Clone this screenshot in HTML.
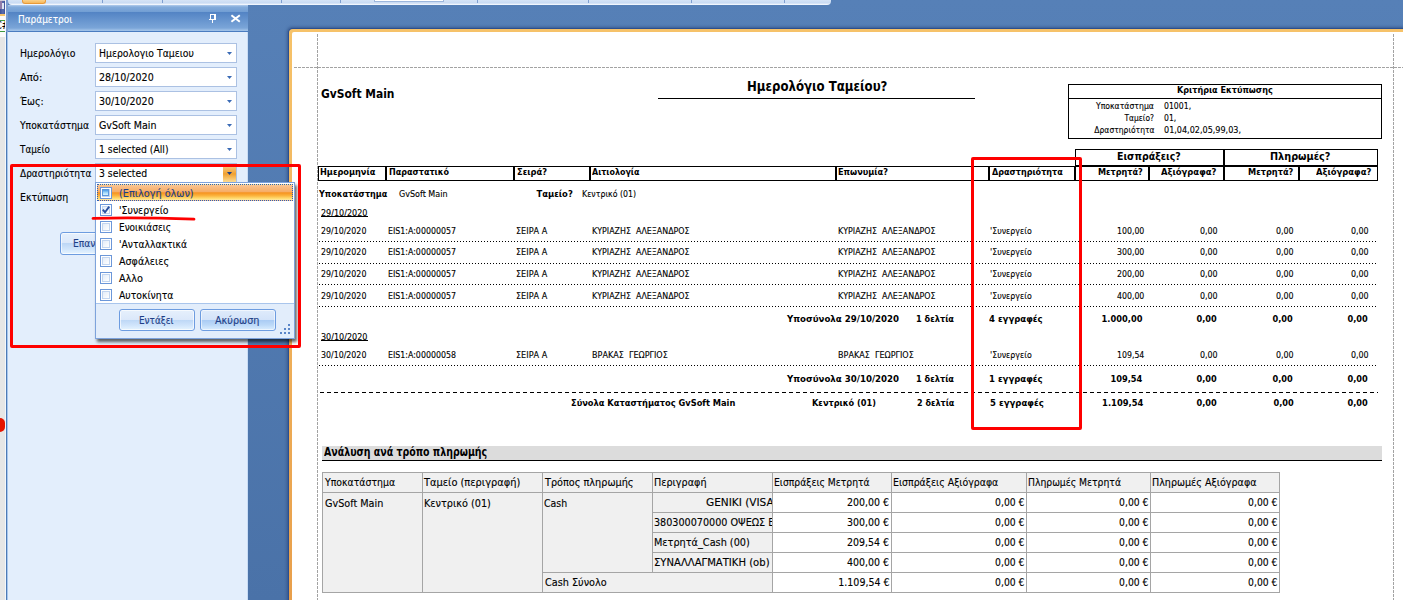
<!DOCTYPE html><html lang="el"><head><meta charset="utf-8"><title>Ημερολόγιο Ταμείου</title><style>
html,body{margin:0;padding:0}
body{width:1403px;height:600px;overflow:hidden;position:relative;background:linear-gradient(#5680b7 0,#4a72a8 600px);font-family:'DejaVu Sans Condensed','DejaVu Sans','Liberation Sans',sans-serif;font-stretch:condensed}
div,span{position:absolute;box-sizing:border-box}
.t{white-space:pre;line-height:1;transform-origin:0 0;-webkit-text-stroke:.12px currentColor}
.b{font-weight:700;-webkit-text-stroke:0}
.r{transform-origin:100% 0}
</style></head><body>
<div style="left:8px;top:0px;width:823px;height:5px;background:linear-gradient(#d6e4f6 0,#c9dbf3 60%,#e6eefa 80%,#fbfdff);border-radius:0 0 4px 4px"></div>
<div style="left:102px;top:0px;width:1px;height:3px;background:#7f9fd0"></div>
<div style="left:162px;top:0px;width:1px;height:3px;background:#7f9fd0"></div>
<div style="left:281px;top:0px;width:1px;height:3px;background:#7f9fd0"></div>
<div style="left:340px;top:0px;width:1px;height:3px;background:#7f9fd0"></div>
<div style="left:477px;top:0px;width:1px;height:3px;background:#7f9fd0"></div>
<div style="left:588px;top:0px;width:1px;height:3px;background:#7f9fd0"></div>
<div style="left:691px;top:0px;width:1px;height:3px;background:#7f9fd0"></div>
<div style="left:784px;top:0px;width:1px;height:3px;background:#7f9fd0"></div>
<div style="left:22px;top:0px;width:24px;height:4px;background:linear-gradient(#fbd28a,#f7b85a);border:1px solid #e89a3a;border-top:0;border-radius:0 0 3px 3px"></div>
<div style="left:374px;top:0px;width:70px;height:2px;background:#fff;border:1px solid #9db7dd;border-top:0"></div>
<div style="left:0px;top:0px;width:6px;height:600px;background:#e6e6e6"></div>
<div style="left:0px;top:0px;width:5px;height:14px;background:linear-gradient(90deg,#3b4f96,#5d6fb0 60%,#3b4f96)"></div>
<div style="left:0px;top:0px;width:5px;height:1px;background:#cfcbd8"></div>
<div style="left:0px;top:1px;width:2px;height:8px;background:#8f7ba9"></div>
<div style="left:2px;top:3px;width:2px;height:6px;background:#dde5f4"></div>
<div style="left:0px;top:14px;width:5px;height:2px;background:#f6c46c"></div>
<div style="left:0px;top:16px;width:5px;height:21px;background:#fbfbfb"></div>
<div style="left:0px;top:20px;width:5px;height:1px;background:#3f9a3f"></div>
<div style="left:0px;top:31px;width:5px;height:1px;background:#3f9a3f"></div>
<span class="t" style="top:21px;font-size:10px;left:-4.6px;">C#</span>
<div style="left:5px;top:0px;width:1px;height:600px;background:#f4f7fb"></div>
<div style="left:6px;top:0px;width:1px;height:600px;background:#4d7ab6"></div>
<div style="left:7px;top:0px;width:1px;height:600px;background:#a8c6ec"></div>
<div style="left:6px;top:0px;width:2px;height:32px;background:#7d9fd2"></div>
<div style="left:0px;top:418px;width:5px;height:14px;background:#e61400;border-radius:0 5px 5px 0"></div>
<div style="left:8px;top:5px;width:240px;height:595px;background:#e3eefc;border-right:1px solid #c9dcf5"></div>
<div style="left:8px;top:5px;width:240px;height:27px;background:linear-gradient(#b3cdec 0,#83abdb 2px,#739fd4 6.5px,#5283c4 7px,#7aa5d8 23px,#9abde5 25px,#9fc1e7 25.8px,#4a7cc0 26px)"></div>
<span class="t" style="top:14px;font-size:11px;color:#fff;left:18px;transform:scaleX(0.9022);">Παράμετροι</span>
<div style="left:210px;top:14px;width:6px;height:5px;border:1px solid #fff;border-right-width:2px;border-bottom:0"></div>
<div style="left:209px;top:19px;width:7px;height:1px;background:#fff"></div>
<div style="left:212px;top:20px;width:1px;height:3px;background:#fff"></div>
<svg style="position:absolute;left:230px;top:14px" width="11" height="9" viewBox="0 0 11 9"><path d="M1.4 1.2 L9.8 7.8 M9.8 1.2 L1.4 7.8" stroke="#fff" stroke-width="2" fill="none"/></svg>
<span class="t" style="top:48px;font-size:11px;left:19.6px;transform:scaleX(0.9455);">Ημερολόγιο</span>
<span class="t" style="top:72px;font-size:11px;left:19.6px;transform:scaleX(1.0079);">Από:</span>
<span class="t" style="top:96px;font-size:11px;left:19.6px;transform:scaleX(0.9546);">Έως:</span>
<span class="t" style="top:120px;font-size:11px;left:19.6px;transform:scaleX(0.9297);">Υποκατάστημα</span>
<span class="t" style="top:144px;font-size:11px;left:19.6px;transform:scaleX(0.8922);">Ταμείο</span>
<span class="t" style="top:168px;font-size:11px;left:19.6px;transform:scaleX(0.9097);">Δραστηριότητα</span>
<span class="t" style="top:192px;font-size:11px;left:19.6px;transform:scaleX(0.9513);">Εκτύπωση</span>
<div style="left:95px;top:43px;width:142px;height:20px;background:#fff;border:1px solid #abc1e3"></div>
<span class="t" style="top:48px;font-size:11px;left:98.8px;transform:scaleX(0.9389);">Ημερολογιο Ταμειου</span>
<svg style="position:absolute;left:227px;top:52px" width="5" height="3" viewBox="0 0 5 3"><path d="M0 0H5L2.5 3Z" fill="#3a6ab5"/></svg>
<div style="left:95px;top:67px;width:142px;height:20px;background:#fff;border:1px solid #abc1e3"></div>
<span class="t" style="top:72px;font-size:11px;left:98.8px;transform:scaleX(0.9591);">28/10/2020</span>
<svg style="position:absolute;left:227px;top:76px" width="5" height="3" viewBox="0 0 5 3"><path d="M0 0H5L2.5 3Z" fill="#3a6ab5"/></svg>
<div style="left:95px;top:91px;width:142px;height:20px;background:#fff;border:1px solid #abc1e3"></div>
<span class="t" style="top:96px;font-size:11px;left:98.8px;transform:scaleX(0.9591);">30/10/2020</span>
<svg style="position:absolute;left:227px;top:100px" width="5" height="3" viewBox="0 0 5 3"><path d="M0 0H5L2.5 3Z" fill="#3a6ab5"/></svg>
<div style="left:95px;top:115px;width:142px;height:20px;background:#fff;border:1px solid #abc1e3"></div>
<span class="t" style="top:120px;font-size:11px;left:98.8px;transform:scaleX(0.9599);">GvSoft Main</span>
<svg style="position:absolute;left:227px;top:124px" width="5" height="3" viewBox="0 0 5 3"><path d="M0 0H5L2.5 3Z" fill="#3a6ab5"/></svg>
<div style="left:95px;top:139px;width:142px;height:20px;background:#fff;border:1px solid #abc1e3"></div>
<span class="t" style="top:144px;font-size:11px;left:98.8px;transform:scaleX(0.9347);">1 selected (All)</span>
<svg style="position:absolute;left:227px;top:148px" width="5" height="3" viewBox="0 0 5 3"><path d="M0 0H5L2.5 3Z" fill="#3a6ab5"/></svg>
<div style="left:95px;top:163px;width:142px;height:20px;background:#fff;border:1px solid #abc1e3"></div>
<span class="t" style="top:168px;font-size:11px;left:98.8px;transform:scaleX(0.9391);">3 selected</span>
<div style="left:223px;top:164px;width:13px;height:18px;background:linear-gradient(#f8d29a,#f2aa44 45%,#f0a030 55%,#fcdc94)"></div>
<svg style="position:absolute;left:227px;top:172px" width="5" height="3" viewBox="0 0 5 3"><path d="M0 0H5L2.5 3Z" fill="#1e3f87"/></svg>
<div style="left:60px;top:232px;width:120px;height:23px;background:linear-gradient(#e6f0fc 0,#dbe8fa 48%,#bdd7f6 50%,#cfe4fb 75%,#e6f4ff);border:1px solid #6d9ce0;border-radius:3px;box-shadow:inset 0 0 0 1px rgba(255,255,255,.65)"></div>
<span class="t" style="top:238px;font-size:11px;color:#1e3f87;left:72.7px;transform:scaleX(0.9272);">Επαν</span>
<div style="left:289px;top:29px;width:1200px;height:700px;background:linear-gradient(#f6c269 0,#e89f4b 571px);border-radius:4px 0 0 0;box-shadow:0 0 0 1px #2c4f8f,-1px -1px 3px 1px rgba(30,55,110,.5)"></div>
<div style="left:292px;top:32px;width:1200px;height:700px;background:#fff;border-radius:2px 0 0 0"></div>
<div style="left:317px;top:34px;width:1px;height:566px;background:repeating-linear-gradient(180deg,#a3a3a3 0 3px,transparent 3px 4px)"></div>
<div style="left:1393px;top:34px;width:1px;height:566px;background:repeating-linear-gradient(180deg,#a3a3a3 0 3px,transparent 3px 4px)"></div>
<div style="left:294px;top:67px;width:1109px;height:1px;background:repeating-linear-gradient(90deg,#a3a3a3 0 3px,transparent 3px 4px)"></div>
<span class="t b" style="top:88px;font-size:12px;left:321px;transform:scaleX(0.9916);">GvSoft Main</span>
<span class="t b" style="top:80px;font-size:13.33px;left:746.5px;transform:scaleX(0.9796);">Ημερολόγιο Ταμείου?</span>
<div style="left:658px;top:98px;width:317px;height:1px;background:#000"></div>
<div style="left:1068px;top:84px;width:314px;height:55px;border:1px solid #000"></div>
<div style="left:1068px;top:98px;width:314px;height:1px;background:#000"></div>
<span class="t b" style="top:85px;font-size:9.33px;left:1177.3px;transform:scaleX(0.9644);">Κριτήρια Εκτύπωσης</span>
<span class="t r" style="top:101px;font-size:9.33px;left:1091.45px;transform:scaleX(0.9213);">Υποκατάστημα</span>
<span class="t r" style="top:113px;font-size:9.33px;left:1121.43px;transform:scaleX(0.8948);">Ταμείο?</span>
<span class="t r" style="top:125px;font-size:9.33px;left:1087.84px;transform:scaleX(0.9044);">Δραστηριότητα</span>
<span class="t" style="top:101px;font-size:9.33px;left:1164px;transform:scaleX(0.9230);">01001,</span>
<span class="t" style="top:113px;font-size:9.33px;left:1164px;transform:scaleX(0.9143);">01,</span>
<span class="t" style="top:125px;font-size:9.33px;left:1164px;transform:scaleX(0.9619);">01,04,02,05,99,03,</span>
<div style="left:318px;top:166px;width:1060px;height:1px;background:#000"></div>
<div style="left:318px;top:180px;width:1060px;height:1px;background:#000"></div>
<div style="left:318px;top:166px;width:1px;height:15px;background:#000"></div>
<div style="left:385px;top:166px;width:2px;height:15px;background:#000"></div>
<div style="left:513px;top:166px;width:2px;height:15px;background:#000"></div>
<div style="left:589px;top:166px;width:2px;height:15px;background:#000"></div>
<div style="left:835px;top:166px;width:2px;height:15px;background:#000"></div>
<div style="left:988px;top:166px;width:2px;height:15px;background:#000"></div>
<div style="left:1074px;top:166px;width:2px;height:15px;background:#000"></div>
<div style="left:1075px;top:149px;width:303px;height:1px;background:#000"></div>
<div style="left:1075px;top:165px;width:303px;height:1px;background:#000"></div>
<div style="left:1075px;top:149px;width:1px;height:17px;background:#000"></div>
<div style="left:1223px;top:149px;width:2px;height:32px;background:#000"></div>
<div style="left:1148px;top:166px;width:2px;height:15px;background:#000"></div>
<div style="left:1298px;top:166px;width:2px;height:15px;background:#000"></div>
<div style="left:1377px;top:149px;width:1px;height:32px;background:#000"></div>
<span class="t b" style="top:167px;font-size:9.33px;left:320.2px;transform:scaleX(0.9777);">Ημερομηνία</span>
<span class="t b" style="top:167px;font-size:9.33px;left:389.2px;transform:scaleX(0.9588);">Παραστατικό</span>
<span class="t b" style="top:167px;font-size:9.33px;left:517.25px;transform:scaleX(0.9892);">Σειρά?</span>
<span class="t b" style="top:167px;font-size:9.33px;left:591.8px;transform:scaleX(0.9480);">Αιτιολογία</span>
<span class="t b" style="top:167px;font-size:9.33px;left:838.3px;transform:scaleX(0.9757);">Επωνυμία?</span>
<span class="t b" style="top:167px;font-size:9.33px;left:991.5px;transform:scaleX(0.9601);">Δραστηριότητα</span>
<span class="t b" style="top:167px;font-size:9.33px;left:1097.7px;transform:scaleX(0.9664);">Μετρητά?</span>
<span class="t b" style="top:167px;font-size:9.33px;left:1161.3px;transform:scaleX(1.0039);">Αξιόγραφα?</span>
<span class="t b" style="top:167px;font-size:9.33px;left:1247.6px;transform:scaleX(0.9771);">Μετρητά?</span>
<span class="t b" style="top:167px;font-size:9.33px;left:1316.4px;transform:scaleX(1.0020);">Αξιόγραφα?</span>
<span class="t b" style="top:151px;font-size:11px;left:1117.3px;transform:scaleX(0.9525);">Εισπράξεις?</span>
<span class="t b" style="top:151px;font-size:11px;left:1270.4px;transform:scaleX(0.9807);">Πληρωμές?</span>
<span class="t b" style="top:189px;font-size:9.33px;left:319.3px;transform:scaleX(0.9585);">Υποκατάστημα</span>
<span class="t" style="top:189px;font-size:9.33px;left:399.25px;transform:scaleX(0.9563);">GvSoft Main</span>
<span class="t b" style="top:189px;font-size:9.33px;left:536.5px;">Ταμείο?</span>
<span class="t" style="top:189px;font-size:9.33px;left:581.5px;transform:scaleX(0.9323);">Κεντρικό (01)</span>
<span class="t" style="top:208px;font-size:9.33px;left:321.2px;transform:scaleX(0.9592);">29/10/2020</span>
<div style="left:321px;top:216px;width:47px;height:1px;background:#000"></div>
<span class="t" style="top:226px;font-size:9.33px;left:321.2px;transform:scaleX(0.9385);">29/10/2020</span>
<span class="t" style="top:226px;font-size:9.33px;left:388.3px;transform:scaleX(0.9393);">EIS1:A:00000057</span>
<span class="t" style="top:226px;font-size:9.33px;left:516px;transform:scaleX(0.9665);">ΣΕΙΡΑ Α</span>
<span class="t" style="top:226px;font-size:9.33px;left:591.5px;transform:scaleX(0.9439);">ΚΥΡΙΑΖΗΣ  ΑΛΕΞΑΝΔΡΟΣ</span>
<span class="t" style="top:226px;font-size:9.33px;left:837.6px;transform:scaleX(0.9439);">ΚΥΡΙΑΖΗΣ  ΑΛΕΞΑΝΔΡΟΣ</span>
<span class="t" style="top:226px;font-size:9.33px;left:989.9px;transform:scaleX(0.9393);">'Συνεργείο</span>
<span class="t r" style="top:226px;font-size:9.33px;left:1114.74px;transform:scaleX(0.9333);">100,00</span>
<span class="t r" style="top:226px;font-size:9.33px;left:1199.11px;transform:scaleX(0.9472);">0,00</span>
<span class="t r" style="top:226px;font-size:9.33px;left:1274.91px;transform:scaleX(0.9472);">0,00</span>
<span class="t r" style="top:226px;font-size:9.33px;left:1349.91px;transform:scaleX(0.9472);">0,00</span>
<span class="t" style="top:247px;font-size:9.33px;left:321.2px;transform:scaleX(0.9385);">29/10/2020</span>
<span class="t" style="top:247px;font-size:9.33px;left:388.3px;transform:scaleX(0.9393);">EIS1:A:00000057</span>
<span class="t" style="top:247px;font-size:9.33px;left:516px;transform:scaleX(0.9665);">ΣΕΙΡΑ Α</span>
<span class="t" style="top:247px;font-size:9.33px;left:591.5px;transform:scaleX(0.9439);">ΚΥΡΙΑΖΗΣ  ΑΛΕΞΑΝΔΡΟΣ</span>
<span class="t" style="top:247px;font-size:9.33px;left:837.6px;transform:scaleX(0.9439);">ΚΥΡΙΑΖΗΣ  ΑΛΕΞΑΝΔΡΟΣ</span>
<span class="t" style="top:247px;font-size:9.33px;left:989.9px;transform:scaleX(0.9393);">'Συνεργείο</span>
<span class="t r" style="top:247px;font-size:9.33px;left:1114.74px;transform:scaleX(0.9333);">300,00</span>
<span class="t r" style="top:247px;font-size:9.33px;left:1199.11px;transform:scaleX(0.9472);">0,00</span>
<span class="t r" style="top:247px;font-size:9.33px;left:1274.91px;transform:scaleX(0.9472);">0,00</span>
<span class="t r" style="top:247px;font-size:9.33px;left:1349.91px;transform:scaleX(0.9472);">0,00</span>
<span class="t" style="top:269px;font-size:9.33px;left:321.2px;transform:scaleX(0.9385);">29/10/2020</span>
<span class="t" style="top:269px;font-size:9.33px;left:388.3px;transform:scaleX(0.9393);">EIS1:A:00000057</span>
<span class="t" style="top:269px;font-size:9.33px;left:516px;transform:scaleX(0.9665);">ΣΕΙΡΑ Α</span>
<span class="t" style="top:269px;font-size:9.33px;left:591.5px;transform:scaleX(0.9439);">ΚΥΡΙΑΖΗΣ  ΑΛΕΞΑΝΔΡΟΣ</span>
<span class="t" style="top:269px;font-size:9.33px;left:837.6px;transform:scaleX(0.9439);">ΚΥΡΙΑΖΗΣ  ΑΛΕΞΑΝΔΡΟΣ</span>
<span class="t" style="top:269px;font-size:9.33px;left:989.9px;transform:scaleX(0.9393);">'Συνεργείο</span>
<span class="t r" style="top:269px;font-size:9.33px;left:1114.74px;transform:scaleX(0.9333);">200,00</span>
<span class="t r" style="top:269px;font-size:9.33px;left:1199.11px;transform:scaleX(0.9472);">0,00</span>
<span class="t r" style="top:269px;font-size:9.33px;left:1274.91px;transform:scaleX(0.9472);">0,00</span>
<span class="t r" style="top:269px;font-size:9.33px;left:1349.91px;transform:scaleX(0.9472);">0,00</span>
<span class="t" style="top:291px;font-size:9.33px;left:321.2px;transform:scaleX(0.9385);">29/10/2020</span>
<span class="t" style="top:291px;font-size:9.33px;left:388.3px;transform:scaleX(0.9393);">EIS1:A:00000057</span>
<span class="t" style="top:291px;font-size:9.33px;left:516px;transform:scaleX(0.9665);">ΣΕΙΡΑ Α</span>
<span class="t" style="top:291px;font-size:9.33px;left:591.5px;transform:scaleX(0.9439);">ΚΥΡΙΑΖΗΣ  ΑΛΕΞΑΝΔΡΟΣ</span>
<span class="t" style="top:291px;font-size:9.33px;left:837.6px;transform:scaleX(0.9439);">ΚΥΡΙΑΖΗΣ  ΑΛΕΞΑΝΔΡΟΣ</span>
<span class="t" style="top:291px;font-size:9.33px;left:989.9px;transform:scaleX(0.9393);">'Συνεργείο</span>
<span class="t r" style="top:291px;font-size:9.33px;left:1114.74px;transform:scaleX(0.9333);">400,00</span>
<span class="t r" style="top:291px;font-size:9.33px;left:1199.11px;transform:scaleX(0.9472);">0,00</span>
<span class="t r" style="top:291px;font-size:9.33px;left:1274.91px;transform:scaleX(0.9472);">0,00</span>
<span class="t r" style="top:291px;font-size:9.33px;left:1349.91px;transform:scaleX(0.9472);">0,00</span>
<div style="left:319px;top:241px;width:1059px;height:1px;background:repeating-linear-gradient(90deg,#000 0 1px,transparent 1px 3px)"></div>
<div style="left:319px;top:263px;width:1059px;height:1px;background:repeating-linear-gradient(90deg,#000 0 1px,transparent 1px 3px)"></div>
<div style="left:319px;top:284px;width:1059px;height:1px;background:repeating-linear-gradient(90deg,#000 0 1px,transparent 1px 3px)"></div>
<div style="left:319px;top:306px;width:1059px;height:1px;background:repeating-linear-gradient(90deg,#000 0 1px,transparent 1px 3px)"></div>
<div style="left:319px;top:365px;width:1059px;height:1px;background:repeating-linear-gradient(90deg,#000 0 1px,transparent 1px 3px)"></div>
<span class="t" style="top:332px;font-size:9.33px;left:321.2px;transform:scaleX(0.9592);">30/10/2020</span>
<div style="left:321px;top:340px;width:47px;height:1px;background:#000"></div>
<span class="t" style="top:350px;font-size:9.33px;left:321.2px;transform:scaleX(0.9385);">30/10/2020</span>
<span class="t" style="top:350px;font-size:9.33px;left:388.3px;transform:scaleX(0.9393);">EIS1:A:00000058</span>
<span class="t" style="top:350px;font-size:9.33px;left:516px;transform:scaleX(0.9665);">ΣΕΙΡΑ Α</span>
<span class="t" style="top:350px;font-size:9.33px;left:591.5px;transform:scaleX(0.9603);">ΒΡΑΚΑΣ  ΓΕΩΡΓΙΟΣ</span>
<span class="t" style="top:350px;font-size:9.33px;left:837.6px;transform:scaleX(0.9603);">ΒΡΑΚΑΣ  ΓΕΩΡΓΙΟΣ</span>
<span class="t" style="top:350px;font-size:9.33px;left:989.9px;transform:scaleX(0.9393);">'Συνεργείο</span>
<span class="t r" style="top:350px;font-size:9.33px;left:1114.74px;transform:scaleX(0.9333);">109,54</span>
<span class="t r" style="top:350px;font-size:9.33px;left:1199.11px;transform:scaleX(0.9472);">0,00</span>
<span class="t r" style="top:350px;font-size:9.33px;left:1274.91px;transform:scaleX(0.9472);">0,00</span>
<span class="t r" style="top:350px;font-size:9.33px;left:1349.91px;transform:scaleX(0.9472);">0,00</span>
<div style="left:320px;top:392px;width:1058px;height:1px;background:repeating-linear-gradient(90deg,#000 0 4px,transparent 4px 7px)"></div>
<span class="t b" style="top:314px;font-size:9.33px;left:786.5px;transform:scaleX(1.0283);">Υποσύνολα 29/10/2020</span>
<span class="t b" style="top:314px;font-size:9.33px;left:915.9px;transform:scaleX(0.9767);">1 δελτία</span>
<span class="t b" style="top:314px;font-size:9.33px;left:989.4px;transform:scaleX(1.0140);">4 εγγραφές</span>
<span class="t b r" style="top:314px;font-size:9.33px;left:1101.18px;transform:scaleX(0.9850);">1.000,00</span>
<span class="t b r" style="top:314px;font-size:9.33px;left:1195.88px;transform:scaleX(0.9798);">0,00</span>
<span class="t b r" style="top:314px;font-size:9.33px;left:1271.78px;transform:scaleX(0.9798);">0,00</span>
<span class="t b r" style="top:314px;font-size:9.33px;left:1347.08px;transform:scaleX(0.9798);">0,00</span>
<span class="t b" style="top:374px;font-size:9.33px;left:786.5px;transform:scaleX(1.0283);">Υποσύνολα 30/10/2020</span>
<span class="t b" style="top:374px;font-size:9.33px;left:915.9px;transform:scaleX(0.9767);">1 δελτία</span>
<span class="t b" style="top:374px;font-size:9.33px;left:989.4px;transform:scaleX(1.0140);">1 εγγραφές</span>
<span class="t b r" style="top:374px;font-size:9.33px;left:1110.21px;transform:scaleX(0.9879);">109,54</span>
<span class="t b r" style="top:374px;font-size:9.33px;left:1195.88px;transform:scaleX(0.9798);">0,00</span>
<span class="t b r" style="top:374px;font-size:9.33px;left:1271.78px;transform:scaleX(0.9798);">0,00</span>
<span class="t b r" style="top:374px;font-size:9.33px;left:1347.08px;transform:scaleX(0.9798);">0,00</span>
<span class="t b" style="top:398px;font-size:9.33px;left:571.2px;transform:scaleX(0.9855);">Σύνολα Καταστήματος GvSoft Main</span>
<span class="t b" style="top:398px;font-size:9.33px;left:812.4px;transform:scaleX(0.9751);">Κεντρικό (01)</span>
<span class="t b" style="top:398px;font-size:9.33px;left:916.6px;transform:scaleX(0.9587);">2 δελτία</span>
<span class="t b" style="top:398px;font-size:9.33px;left:990px;transform:scaleX(1.0178);">5 εγγραφές</span>
<span class="t b r" style="top:398px;font-size:9.33px;left:1102.28px;transform:scaleX(0.9971);">1.109,54</span>
<span class="t b r" style="top:398px;font-size:9.33px;left:1196.48px;transform:scaleX(0.9798);">0,00</span>
<span class="t b r" style="top:398px;font-size:9.33px;left:1272.78px;transform:scaleX(0.9798);">0,00</span>
<span class="t b r" style="top:398px;font-size:9.33px;left:1347.08px;transform:scaleX(0.9798);">0,00</span>
<div style="left:322px;top:446px;width:1060px;height:14px;background:#dcdcdc"></div>
<div style="left:322px;top:460px;width:1060px;height:1px;background:#000"></div>
<span class="t b" style="top:447px;font-size:11.5px;left:324.3px;transform:scaleX(0.9101);">Ανάλυση ανά τρόπο πληρωμής</span>
<div style="left:322px;top:472px;width:958px;height:121px;background:#f0f0f0"></div>
<div style="left:772px;top:492px;width:508px;height:101px;background:#fff"></div>
<div style="left:322px;top:472px;width:958px;height:1px;background:#a5a5a5"></div>
<div style="left:322px;top:492px;width:958px;height:1px;background:#a5a5a5"></div>
<div style="left:322px;top:592px;width:958px;height:1px;background:#a5a5a5"></div>
<div style="left:652px;top:512px;width:628px;height:1px;background:#a5a5a5"></div>
<div style="left:652px;top:532px;width:628px;height:1px;background:#a5a5a5"></div>
<div style="left:652px;top:552px;width:628px;height:1px;background:#a5a5a5"></div>
<div style="left:542px;top:572px;width:738px;height:1px;background:#a5a5a5"></div>
<div style="left:322px;top:472px;width:1px;height:121px;background:#a5a5a5"></div>
<div style="left:422px;top:472px;width:1px;height:121px;background:#a5a5a5"></div>
<div style="left:542px;top:472px;width:1px;height:121px;background:#a5a5a5"></div>
<div style="left:1279px;top:472px;width:1px;height:121px;background:#a5a5a5"></div>
<div style="left:652px;top:472px;width:1px;height:101px;background:#a5a5a5"></div>
<div style="left:772px;top:472px;width:1px;height:121px;background:#a5a5a5"></div>
<div style="left:891px;top:472px;width:1px;height:121px;background:#a5a5a5"></div>
<div style="left:1026px;top:472px;width:1px;height:121px;background:#a5a5a5"></div>
<div style="left:1150px;top:472px;width:1px;height:121px;background:#a5a5a5"></div>
<span class="t" style="top:477px;font-size:11px;left:324.6px;transform:scaleX(0.9445);">Υποκατάστημα</span>
<span class="t" style="top:477px;font-size:11px;left:424.1px;transform:scaleX(0.9939);">Ταμείο (περιγραφή)</span>
<span class="t" style="top:477px;font-size:11px;left:544.6px;transform:scaleX(0.9793);">Τρόπος πληρωμής</span>
<span class="t" style="top:477px;font-size:11px;left:654.3px;transform:scaleX(0.9742);">Περιγραφή</span>
<span class="t" style="top:477px;font-size:11px;left:774.3px;transform:scaleX(0.9320);">Εισπράξεις Μετρητά</span>
<span class="t" style="top:477px;font-size:11px;left:893.4px;transform:scaleX(0.9469);">Εισπράξεις Αξιόγραφα</span>
<span class="t" style="top:477px;font-size:11px;left:1028.4px;transform:scaleX(0.9335);">Πληρωμές Μετρητά</span>
<span class="t" style="top:477px;font-size:11px;left:1152.2px;transform:scaleX(0.9663);">Πληρωμές Αξιόγραφα</span>
<span class="t" style="top:498px;font-size:11px;left:324.6px;transform:scaleX(0.9750);">GvSoft Main</span>
<span class="t" style="top:498px;font-size:11px;left:424.1px;transform:scaleX(0.9795);">Κεντρικό (01)</span>
<span class="t" style="top:498px;font-size:11px;left:544.3px;transform:scaleX(0.9465);">Cash</span>
<span class="t" style="top:577px;font-size:11px;left:544.6px;transform:scaleX(0.9775);">Cash Σύνολο</span>
<div style="left:653px;top:493px;width:119px;height:99px;overflow:hidden"><span class="t" style="top:4px;font-size:11px;left:53.299999999999955px;transform:scaleX(1.0649);">GENIKI (VISA)</span></div>
<div style="left:653px;top:493px;width:119px;height:99px;overflow:hidden"><span class="t" style="top:24px;font-size:11px;left:1.2999999999999545px;transform:scaleX(0.9726);">380300070000 ΟΨΕΩΣ ΕΘΝΙΚΗΣ</span></div>
<div style="left:653px;top:493px;width:119px;height:99px;overflow:hidden"><span class="t" style="top:44px;font-size:11px;left:1.3999999999999773px;transform:scaleX(0.9805);">Μετρητά_Cash (00)</span></div>
<div style="left:653px;top:493px;width:119px;height:99px;overflow:hidden"><span class="t" style="top:64px;font-size:11px;left:1.3999999999999773px;transform:scaleX(1.0168);">ΣΥΝΑΛΛΑΓΜΑΤΙΚΗ (ob)</span></div>
<span class="t r" style="top:497px;font-size:11px;left:845.14px;transform:scaleX(0.9532);">200,00 €</span>
<span class="t r" style="top:497px;font-size:11px;left:992.73px;transform:scaleX(0.9343);">0,00 €</span>
<span class="t r" style="top:497px;font-size:11px;left:1116.73px;transform:scaleX(0.9343);">0,00 €</span>
<span class="t r" style="top:497px;font-size:11px;left:1245.73px;transform:scaleX(0.9343);">0,00 €</span>
<span class="t r" style="top:517px;font-size:11px;left:845.14px;transform:scaleX(0.9532);">300,00 €</span>
<span class="t r" style="top:517px;font-size:11px;left:992.73px;transform:scaleX(0.9343);">0,00 €</span>
<span class="t r" style="top:517px;font-size:11px;left:1116.73px;transform:scaleX(0.9343);">0,00 €</span>
<span class="t r" style="top:517px;font-size:11px;left:1245.73px;transform:scaleX(0.9343);">0,00 €</span>
<span class="t r" style="top:537px;font-size:11px;left:845.14px;transform:scaleX(0.9532);">209,54 €</span>
<span class="t r" style="top:537px;font-size:11px;left:992.73px;transform:scaleX(0.9343);">0,00 €</span>
<span class="t r" style="top:537px;font-size:11px;left:1116.73px;transform:scaleX(0.9343);">0,00 €</span>
<span class="t r" style="top:537px;font-size:11px;left:1245.73px;transform:scaleX(0.9343);">0,00 €</span>
<span class="t r" style="top:557px;font-size:11px;left:845.14px;transform:scaleX(0.9532);">400,00 €</span>
<span class="t r" style="top:557px;font-size:11px;left:992.73px;transform:scaleX(0.9343);">0,00 €</span>
<span class="t r" style="top:557px;font-size:11px;left:1116.73px;transform:scaleX(0.9343);">0,00 €</span>
<span class="t r" style="top:557px;font-size:11px;left:1245.73px;transform:scaleX(0.9343);">0,00 €</span>
<span class="t r" style="top:577px;font-size:11px;left:835.7px;transform:scaleX(0.9570);">1.109,54 €</span>
<span class="t r" style="top:577px;font-size:11px;left:992.73px;transform:scaleX(0.9343);">0,00 €</span>
<span class="t r" style="top:577px;font-size:11px;left:1116.73px;transform:scaleX(0.9343);">0,00 €</span>
<span class="t r" style="top:577px;font-size:11px;left:1245.73px;transform:scaleX(0.9343);">0,00 €</span>
<div style="left:95px;top:182px;width:200px;height:157px;background:#fff;border:1px solid #7da3dc;box-shadow:2px 3px 3px rgba(0,0,0,.6)"></div>
<div style="left:96px;top:303px;width:198px;height:35px;background:#e2edfb;border-top:1px solid #a9c5ec"></div>
<div style="left:97px;top:184px;width:196px;height:17px;background:linear-gradient(#f9c594 0,#f6ad66 45%,#f6931f 52%,#fbb53f 72%,#ffdc73 90%,#fee9a6);border:1px dotted #2f5fb5"></div>
<div style="left:100px;top:187px;width:12px;height:12px;background:#fff;border:1px solid #6c97d9"><div style="left:1px;top:1px;width:8px;height:8px;border:1px solid #c2d5f0;background:linear-gradient(135deg,#e4ecf8,#fff)"></div></div>
<div style="left:100px;top:204px;width:12px;height:12px;background:#fff;border:1px solid #6c97d9"><div style="left:1px;top:1px;width:8px;height:8px;border:1px solid #c2d5f0;background:linear-gradient(135deg,#e4ecf8,#fff)"></div></div>
<div style="left:100px;top:221px;width:12px;height:12px;background:#fff;border:1px solid #6c97d9"><div style="left:1px;top:1px;width:8px;height:8px;border:1px solid #c2d5f0;background:linear-gradient(135deg,#e4ecf8,#fff)"></div></div>
<div style="left:100px;top:238px;width:12px;height:12px;background:#fff;border:1px solid #6c97d9"><div style="left:1px;top:1px;width:8px;height:8px;border:1px solid #c2d5f0;background:linear-gradient(135deg,#e4ecf8,#fff)"></div></div>
<div style="left:100px;top:255px;width:12px;height:12px;background:#fff;border:1px solid #6c97d9"><div style="left:1px;top:1px;width:8px;height:8px;border:1px solid #c2d5f0;background:linear-gradient(135deg,#e4ecf8,#fff)"></div></div>
<div style="left:100px;top:272px;width:12px;height:12px;background:#fff;border:1px solid #6c97d9"><div style="left:1px;top:1px;width:8px;height:8px;border:1px solid #c2d5f0;background:linear-gradient(135deg,#e4ecf8,#fff)"></div></div>
<div style="left:100px;top:289px;width:12px;height:12px;background:#fff;border:1px solid #6c97d9"><div style="left:1px;top:1px;width:8px;height:8px;border:1px solid #c2d5f0;background:linear-gradient(135deg,#e4ecf8,#fff)"></div></div>
<div style="left:102px;top:189px;width:7px;height:7px;background:linear-gradient(#4a9ae6,#a6dcfb 55%,#d9f2ff);border:1px solid #5b97dc"></div>
<svg style="position:absolute;left:101px;top:205px" width="10" height="10" viewBox="0 0 10 10"><path d="M1.8 4.6 L4 7.2 L8.2 1.6" stroke="#2a4f9f" stroke-width="1.9" fill="none"/></svg>
<span class="t" style="top:188px;font-size:11px;color:#1e3f87;left:118.7px;transform:scaleX(0.9792);">(Επιλογή όλων)</span>
<span class="t" style="top:205px;font-size:11px;left:118.5px;transform:scaleX(0.9453);">'Συνεργείο</span>
<span class="t" style="top:222px;font-size:11px;left:119px;transform:scaleX(0.9017);">Ενοικιάσεις</span>
<span class="t" style="top:239px;font-size:11px;left:118.5px;transform:scaleX(0.9285);">'Ανταλλακτικά</span>
<span class="t" style="top:256px;font-size:11px;left:119px;transform:scaleX(0.9650);">Ασφάλειες</span>
<span class="t" style="top:273px;font-size:11px;left:119px;transform:scaleX(0.9783);">Αλλο</span>
<span class="t" style="top:290px;font-size:11px;left:119px;transform:scaleX(0.9384);">Αυτοκίνητα</span>
<div style="left:119px;top:309px;width:76px;height:22px;background:linear-gradient(#e6f0fc 0,#dbe8fa 48%,#bdd7f6 50%,#cfe4fb 75%,#e6f4ff);border:1px solid #6d9ce0;border-radius:3px;box-shadow:inset 0 0 0 1px rgba(255,255,255,.65)"></div>
<div style="left:200px;top:309px;width:76px;height:22px;background:linear-gradient(#dfebfb 0,#d3e3f9 48%,#a9cbf4 50%,#bcd9f8 75%,#dbeeff);border:1px solid #6d9ce0;border-radius:3px;box-shadow:inset 0 0 0 1px rgba(255,255,255,.55)"></div>
<span class="t" style="top:315px;font-size:11px;color:#1e3f87;left:138.6px;transform:scaleX(0.8965);">Εντάξει</span>
<span class="t" style="top:315px;font-size:11px;color:#1e3f87;left:215px;transform:scaleX(0.9768);">Ακύρωση</span>
<div style="left:288px;top:324px;width:2px;height:2px;background:#5b86c8"></div>
<div style="left:284px;top:328px;width:2px;height:2px;background:#5b86c8"></div>
<div style="left:288px;top:328px;width:2px;height:2px;background:#5b86c8"></div>
<div style="left:280px;top:332px;width:2px;height:2px;background:#5b86c8"></div>
<div style="left:284px;top:332px;width:2px;height:2px;background:#5b86c8"></div>
<div style="left:288px;top:332px;width:2px;height:2px;background:#5b86c8"></div>
<div style="left:10px;top:164px;width:291px;height:184px;border:3px solid #fe0000;border-radius:2px"></div>
<div style="left:971px;top:157px;width:111px;height:273px;border:3px solid #fe0000;border-radius:2px"></div>
<svg style="position:absolute;left:90px;top:212.6px" width="110" height="10" viewBox="0 0 110 10"><path d="M3 5.4 C30 4.6 70 5.0 104 6.2" stroke="#fe0000" stroke-width="2.8" stroke-linecap="round" fill="none"/></svg>
</body></html>
